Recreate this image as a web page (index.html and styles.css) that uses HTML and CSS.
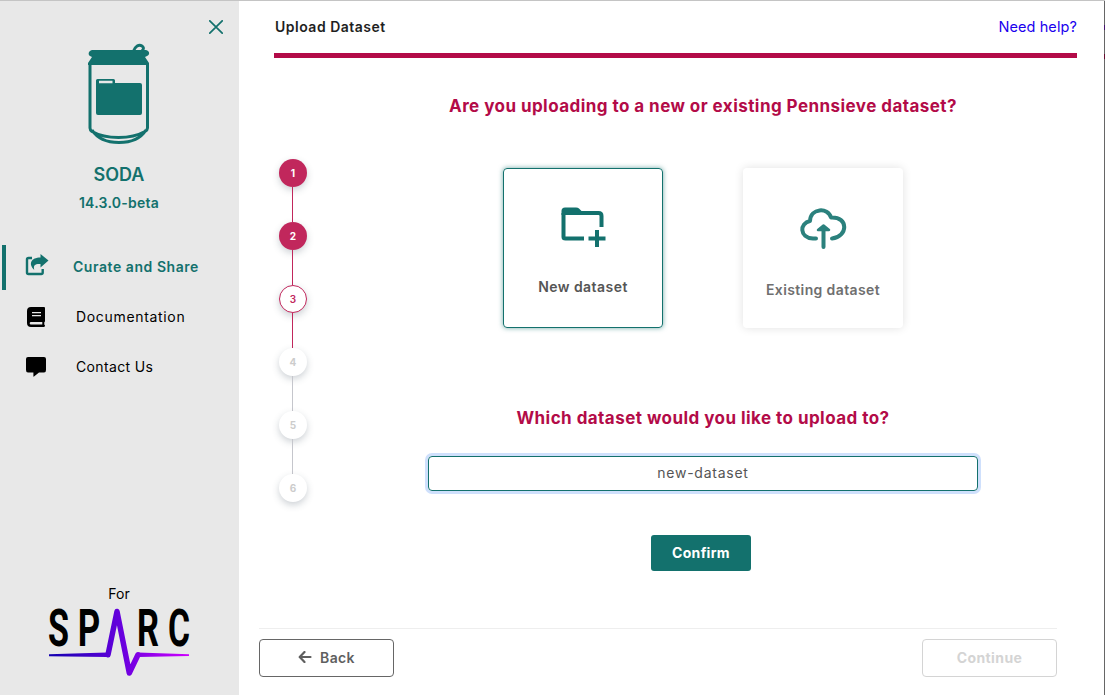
FILE: index.html
```html
<!DOCTYPE html>
<html lang="en">
<head>
<meta charset="utf-8">
<title>SODA</title>
<link rel="stylesheet" href="styles.css">
</head>
<body>
<div class="app">
  <nav class="sidebar">
    <div class="brand">
      <svg class="close" width="14" height="14" viewBox="0 0 14 14"><path d="M.8.8l12.400 12.400M13.200.8L.8 13.200" stroke="#13716d" stroke-width="1.700" fill="none" stroke-linecap="round"/></svg>
      <svg class="can" width="64" height="104" viewBox="0 0 64 104">
        <path d="M46 10c2-6 6-8 9-6s1 5-3 7" fill="none" stroke="#13716d" stroke-width="2.800"/>
        <path d="M5 8h54c4 1 4 5 1 6l-2 1 4 6v2H1v-2l4-6-2-1C1 13 1 9 5 8z" fill="#13716d"/>
        <path d="M3 21v65q0 2 2 3.500c14 8 39 8 53 0q2.500-1.500 2.500-3.500V21M5 88c5 8 14 12.500 27 12.500S54 96 59 88" fill="none" stroke="#13716d" stroke-width="3"/>
        <path d="M10.500 37h16q1.500 0 1.500 1.500V41h25q2 0 2 2v28q0 2-2 2H11q-2 0-2-2V38.500Q9 37 10.500 37zM12 38.800v2.400h13.500v-2.400z" fill="#13716d" fill-rule="evenodd"/>
      </svg>
      <div class="name"><span>SODA</span></div>
      <div class="version"><span>14.3.0-beta</span></div>
    </div>
    <div class="item active">
      <svg width="24" height="22" viewBox="0 0 24 22"><path d="M7 4H3.500Q2 4 2 5.500v13Q2 20 3.500 20h12.700q1.500 0 1.500-1.500V15" fill="none" stroke="#13716d" stroke-width="2.400"/><path d="M15.500 0L23.500 6.500 15.500 13.500V10c-5-.3-7.500.8-6.200 6C3 10 6 3.500 15.500 3.500z" fill="#13716d"/></svg>
      <span>Curate and Share</span>
    </div>
    <div class="item docs">
      <svg width="24" height="22" viewBox="0 0 24 22"><path d="M6 1h13q1 0 1 1v13q0 1-.7 1.200v2.600q.7.200.7 1t-1 1.200H6q-4 0-4-4V5q0-4 4-4zM6 16q-1.300 0-1.300 1.200T6 18.500h11.300V16zM7 6v1.200h9V6zm0 3v1.200h9V9z" fill="#000" fill-rule="evenodd"/></svg>
      <span>Documentation</span>
    </div>
    <div class="item contact">
      <svg width="24" height="22" viewBox="0 0 24 22"><path d="M3 1h16q2 0 2 2v11q0 2.500-2 2.500h-5l-5 4q-.6.500-.6-.4v-3.600H3q-2 0-2-2.500V3q0-2 2-2z" fill="#000"/></svg>
      <span>Contact Us</span>
    </div>
    <div class="sparc">
      <div class="for">For</div>
      <svg class="logo" width="152" height="94" viewBox="-4 -20 152 94">
        <defs><linearGradient id="pulse" gradientUnits="userSpaceOnUse" x1="2" y1="0" x2="142" y2="0"><stop offset="0" stop-color="#1200b0"/><stop offset=".5" stop-color="#6400dc"/><stop offset="1" stop-color="#cf00ff"/></linearGradient></defs>
        <g class="letters">
          <text x="1" y="42.500" textLength="21" lengthAdjust="spacingAndGlyphs">S</text>
          <text x="30.800" y="42.500" textLength="22.500" lengthAdjust="spacingAndGlyphs">P</text>
          <text x="90" y="42.500" textLength="22" lengthAdjust="spacingAndGlyphs">R</text>
          <text x="121" y="42.500" textLength="22" lengthAdjust="spacingAndGlyphs">C</text>
        </g>
        <path d="M2 51.300L60 49.500 60 54 2 53.200zM91 49.500l51 1.800v1.800L91 54z" fill="url(#pulse)"/>
        <path d="M61 51.800L70 8.500 82.300 70 91 51.800" fill="none" stroke="url(#pulse)" stroke-width="5.500" stroke-linejoin="round" stroke-linecap="round"/>
      </svg>
    </div>
  </nav>
  <main class="main">
    <header class="header"><h1><span>Upload Dataset</span></h1><a class="help">Need help?</a></header>
    <div class="body">
      <div class="steps">
        <div class="step done">1</div><i class="line on"></i>
        <div class="step done">2</div><i class="line on"></i>
        <div class="step current">3</div><i class="line on"></i>
        <div class="step">4</div><i class="line"></i>
        <div class="step">5</div><i class="line"></i>
        <div class="step">6</div>
      </div>
      <section class="content">
        <h2 class="q1"><span>Are you uploading to a new or existing Pennsieve dataset?</span></h2>
        <div class="cards">
          <div class="card selected">
            <svg width="48" height="44" viewBox="0 0 48 44"><path d="M42.500 21V10q0-3-3-3H21" fill="none" stroke="#13716d" stroke-width="4"/><path d="M4.500 7v24q0 1.500 2 1.500H25" fill="none" stroke="#13716d" stroke-width="4"/><path d="M2.500 9V5q0-3.500 3.500-3.500h11q2 0 3 1L23 5.500V9z" fill="#13716d"/><path d="M38 24v17M29.500 32.500h17" stroke="#13716d" stroke-width="4"/></svg>
            <span>New dataset</span>
          </div>
          <div class="card existing">
            <svg width="48" height="44" viewBox="0 0 48 44"><path d="M17 32.500h-3C0 31.500.5 17 11 15 11.500 2 29 1 32 11.500c18-1 17 19.500 1 21M24.500 41V22" fill="none" stroke="#2b817d" stroke-width="4" stroke-linecap="round" stroke-linejoin="round"/><path d="M24.500 19.500l5.500 4.500H19z" fill="#2b817d" stroke="#2b817d" stroke-width="2.500" stroke-linejoin="round"/></svg>
            <span>Existing dataset</span>
          </div>
        </div>
        <h2 class="q2"><span>Which dataset would you like to upload to?</span></h2>
        <div class="field"><span>new-dataset</span></div>
        <div class="confirm"><span>Confirm</span></div>
      </section>
    </div>
    <footer class="footer">
      <div class="btn back"><svg width="14" height="12" viewBox="0 0 14 12"><path d="M6.500 1L1.700 6l4.800 5M2 6h10.500" fill="none" stroke="#5f5f5f" stroke-width="2.200" stroke-linecap="round" stroke-linejoin="round"/></svg><span>Back</span></div>
      <div class="btn continue"><span>Continue</span></div>
    </footer>
  </main>
  <aside class="edge"><i class="mark link"></i><i class="mark bar"></i></aside>
</div>
</body>
</html>
```
FILE: styles.css
```css
* { box-sizing: border-box; }
body { margin: 0; background: #fff; font-family: Inter, "Open Sans", sans-serif; font-size: 14px; }
svg { display: block; flex: none; }
h1, h2 { margin: 0; }
span { white-space: nowrap; }
.app { display: flex; width: 1105px; height: 695px; border-top: 1px solid #c4c4c4; overflow: hidden; }
.sidebar { width: 239px; background: #e8e8e8; display: flex; flex-direction: column; }
.brand { height: 244px; display: flex; flex-direction: column; align-items: center; color: #13716d; padding-right: 1px; }
.close { align-self: flex-end; margin: 19px 15px 0 0; }
.can { margin: 8px 0 0; }
.name { font-size: 18px; font-weight: 600; line-height: 24px; margin-top: 17px; }
.version { font-size: 14px; font-weight: 600; line-height: 20px; margin-top: 6px; letter-spacing: .25px; }
.item { height: 50px; display: flex; align-items: center; padding-left: 25px; font-size: 14px; color: #000; }
.item span { margin-left: 27px; padding-bottom: 2px; }
.docs { letter-spacing: .67px; }
.contact { letter-spacing: .35px; }
.item.active { height: 45px; margin: 0 0 2px 2px; border-left: 4px solid #13716d; padding-left: 19px; color: #13716d; font-weight: 600; letter-spacing: .55px; }
.item.active svg { margin-bottom: 5px; }
.item.active span { margin-left: 24px; }
.sparc { margin-top: auto; display: flex; flex-direction: column; align-items: center; padding: 0 2px 18px 0; }
.for { font-size: 14px; line-height: 18px; padding-left: 1px; }
.logo { margin-top: -20px; }
.letters { font-family: Roboto, sans-serif; font-size: 52px; font-weight: 700; fill: #000; }
.main { width: 865px; display: flex; flex-direction: column; }
.header { height: 57px; margin: 0 27px 0 35px; padding-left: 1px; border-bottom: 5px solid #b30b48; display: flex; justify-content: space-between; align-items: center; }
.header h1 { font-size: 14px; font-weight: 600; color: #1f1f1f; letter-spacing: .5px; margin-top: -1px; }
.help { color: #1a00ee; font-size: 14.5px; font-weight: 400; letter-spacing: .1px; margin-top: -2px; }
.body { display: flex; height: 570px; }
.steps { width: 80px; padding: 101px 12px 0 40px; display: flex; flex-direction: column; align-items: flex-start; }
.step { width: 28px; height: 28px; flex: none; border-radius: 50%; display: flex; align-items: center; justify-content: center; font-size: 10px; font-weight: 700; color: #ccc; background: #fff; box-shadow: 0 3px 7px rgba(60,75,90,.25); }
.step.done { background: #c1275c; color: #fff; }
.step.current { border: 1px solid #c1275c; color: #c1275c; font-weight: 600; }
.line { width: 1px; height: 35px; margin-left: 13px; background: #c5c6cc; }
.line.on { background: #c1275c; }
.content { width: 768px; display: flex; flex-direction: column; align-items: center; }
.content h2 { color: #b30b48; font-size: 17px; font-weight: 700; line-height: 24px; letter-spacing: .45px; }
.q1 { margin-top: 36px; }
.cards { display: flex; gap: 80px; margin-top: 50px; }
.card { width: 160px; height: 160px; border-radius: 4px; display: flex; flex-direction: column; align-items: center; color: #555; font-weight: 600; font-size: 14px; letter-spacing: .45px; box-shadow: 0 0 10px rgba(0,0,0,.12); padding-top: 38px; }
.card.selected { border: 1px solid #13716d; padding-top: 37px; box-shadow: 0 0 5px rgba(19,113,109,.6); }
.card span { line-height: 20px; margin-top: 27px; }
.card.existing { color: #6f6f6f; letter-spacing: .38px; }
.card.existing span { margin-top: 30px; }
.q2 { margin-top: 78px; }
.field { width: 550px; height: 35px; margin-top: 26px; border: 1px solid #13716d; border-radius: 4px; box-shadow: 0 0 0 3px #cfe0fc; display: flex; align-items: center; justify-content: center; font-size: 14px; color: #555; letter-spacing: .75px; padding-bottom: 2px; }
.confirm { width: 100px; height: 36px; margin-top: 44px; margin-right: 4px; background: #13716d; color: #fff; border-radius: 3px; display: flex; align-items: center; justify-content: center; font-size: 14px; font-weight: 700; letter-spacing: .3px; padding-bottom: 1px; }
.footer { margin: 0 47px 0 20px; border-top: 1px solid #eee; display: flex; justify-content: space-between; padding-top: 10px; height: 67px; }
.btn { width: 135px; height: 38px; border: 1px solid #666; border-radius: 4px; display: flex; align-items: center; justify-content: center; gap: 8px; font-size: 14px; font-weight: 600; color: #5f5f5f; letter-spacing: .4px; padding-bottom: 2px; }
.continue { border-color: #d4d4d4; color: #d4d4d4; font-weight: 700; }
.edge { width: 1px; background: #666; }
.mark { display: block; height: 5px; }
.mark.link { margin-top: 24px; background: #46146e; }
.mark.bar { margin-top: 24px; background: #650c30; }
```
